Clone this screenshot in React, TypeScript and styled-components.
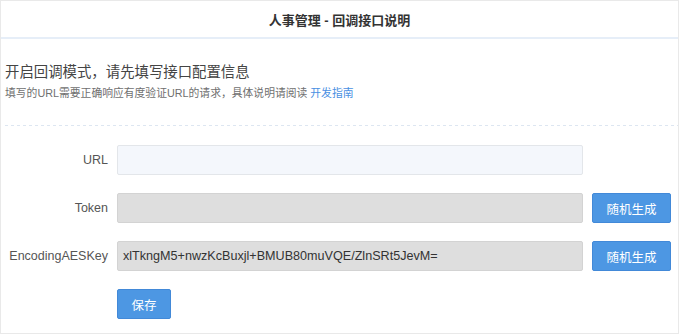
import React from "react";
import styled, { createGlobalStyle } from "styled-components";

const Global = createGlobalStyle`
  html, body { margin: 0; padding: 0; background: #fff; }
  body { font-family: "Liberation Sans", Arial, "Noto Sans CJK SC", sans-serif; }
  * { box-sizing: border-box; }
`;

const Panel = styled.div`
  width: 679px;
  height: 334px;
  border: 1px solid #e9e9e9;
  background: #fff;
  display: flex;
  flex-direction: column;
`;

const Header = styled.div`
  height: 38px;
  border-bottom: 2px solid #e6eef8;
  display: flex;
  align-items: center;
  justify-content: center;
  font-size: 13px;
  font-weight: bold;
  color: #333;
`;

const Intro = styled.div`
  padding: 22px 0 0 4px;
  display: flex;
  flex-direction: column;
`;

const Title = styled.div`
  font-size: 14.4px;
  line-height: 22px;
  color: #444;
`;

const Sub = styled.div`
  margin-top: 1px;
  font-size: 10.8px;
  line-height: 18px;
  color: #6f6f6f;
`;

const Link = styled.a`
  color: #4a90e2;
  text-decoration: none;
`;

const Dashed = styled.div`
  margin: 23px 0 0 4px;
  height: 1px;
  background: repeating-linear-gradient(to right, #dde6f1 0 3px, transparent 3px 6px);
`;

const Form = styled.div`
  margin-top: 19px;
  display: grid;
  grid-template-columns: 107px 466px 79px;
  column-gap: 9px;
  row-gap: 18px;
  align-items: center;
`;

const Label = styled.div`
  text-align: right;
  font-size: 12.5px;
  color: #555;
`;

const Input = styled.div<{ $disabled?: boolean }>`
  height: 30px;
  border: 1px solid ${(p) => (p.$disabled ? "#d3d3d3" : "#e3e6ea")};
  border-radius: 2px;
  background: ${(p) => (p.$disabled ? "#dedede" : "#f4f7fc")};
  padding: 0 5px;
  display: flex;
  align-items: center;
  font-size: 12.6px;
  color: #333;
`;

const Button = styled.button<{ $w?: number }>`
  height: 30px;
  width: ${(p) => (p.$w ? `${p.$w}px` : "100%")};
  border: 1px solid #4289d8;
  border-radius: 2px;
  background: #4d97e3;
  color: #fff;
  font-size: 12.5px;
  font-family: "Liberation Sans", Arial, "Noto Sans CJK SC", sans-serif;
  padding: 0;
  cursor: pointer;
`;

const Empty = styled.div``;

export default function App() {
  return (
    <>
      <Global />
      <Panel>
        <Header>人事管理 - 回调接口说明</Header>
        <Intro>
          <Title>开启回调模式，请先填写接口配置信息</Title>
          <Sub>
            填写的URL需要正确响应有度验证URL的请求，具体说明请阅读 <Link>开发指南</Link>
          </Sub>
        </Intro>
        <Dashed />
        <Form>
          <Label>URL</Label>
          <Input />
          <Empty />
          <Label>Token</Label>
          <Input $disabled />
          <Button>随机生成</Button>
          <Label>EncodingAESKey</Label>
          <Input $disabled>xlTkngM5+nwzKcBuxjl+BMUB80muVQE/ZlnSRt5JevM=</Input>
          <Button>随机生成</Button>
          <Empty />
          <Empty>
            <Button $w={54}>保存</Button>
          </Empty>
          <Empty />
        </Form>
      </Panel>
    </>
  );
}
